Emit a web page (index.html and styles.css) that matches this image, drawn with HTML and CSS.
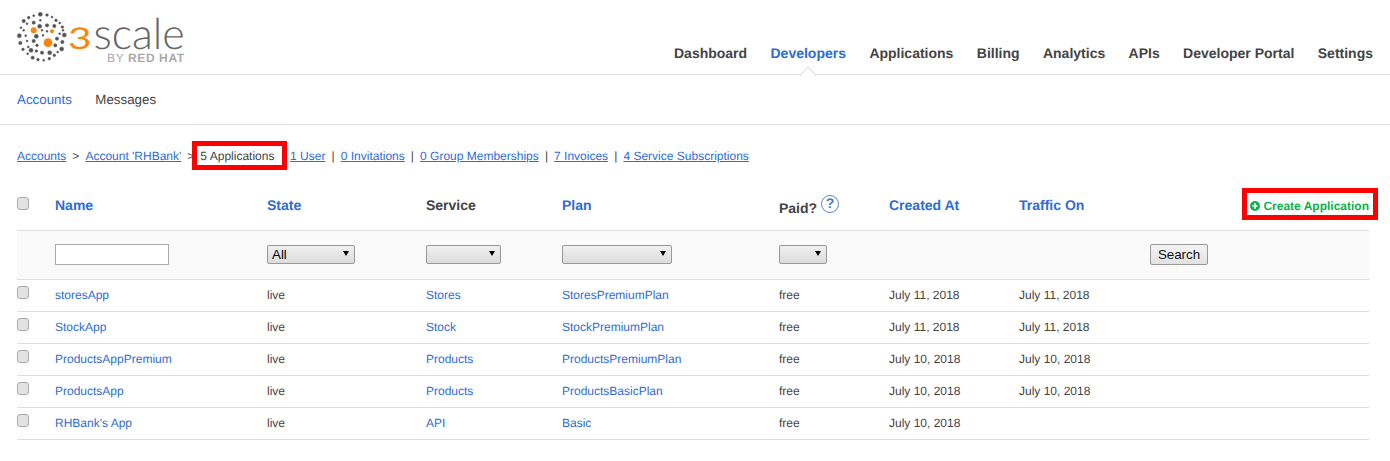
FILE: index.html
```html
<!DOCTYPE html>
<html lang="en">
<head>
    <meta charset="UTF-8">
    <title>Applications</title>
    <link rel="stylesheet" href="styles.css">
</head>
<body>
    <header class="top">
        <div class="logo">
            <svg class="logo-dots" viewBox="50 35 150 150" width="50" height="50">
                <g fill="#555" stroke="#555" stroke-width="1.5">
                    <circle cx="120" cy="42" r="6"/><circle cx="100" cy="46" r="3"/><circle cx="85" cy="52" r="4"/>
                    <circle cx="140" cy="44" r="4"/><circle cx="155" cy="50" r="3"/><circle cx="167" cy="60" r="4"/>
                    <circle cx="178" cy="68" r="3"/><circle cx="186" cy="80" r="4"/><circle cx="70" cy="62" r="5"/>
                    <circle cx="80" cy="70" r="3"/><circle cx="62" cy="82" r="3"/><circle cx="70" cy="90" r="3"/>
                    <circle cx="57" cy="106" r="6"/><circle cx="76" cy="106" r="3"/><circle cx="60" cy="128" r="5"/>
                    <circle cx="80" cy="122" r="3"/><circle cx="68" cy="147" r="4"/><circle cx="84" cy="140" r="3"/>
                    <circle cx="82" cy="160" r="3"/><circle cx="97" cy="172" r="5"/><circle cx="113" cy="178" r="4"/>
                    <circle cx="130" cy="180" r="3"/><circle cx="147" cy="175" r="4"/><circle cx="162" cy="165" r="4"/>
                    <circle cx="172" cy="155" r="3"/><circle cx="184" cy="146" r="6"/><circle cx="186" cy="125" r="5"/>
                    <circle cx="192" cy="104" r="6"/><circle cx="188" cy="90" r="3"/><circle cx="120" cy="60" r="3"/>
                    <circle cx="140" cy="75" r="5"/><circle cx="118" cy="78" r="6"/><circle cx="100" cy="67" r="5"/>
                    <circle cx="162" cy="77" r="5"/><circle cx="178" cy="100" r="3"/><circle cx="170" cy="115" r="5"/>
                    <circle cx="165" cy="135" r="5"/><circle cx="148" cy="157" r="6"/><circle cx="125" cy="157" r="5"/>
                    <circle cx="108" cy="152" r="4"/><circle cx="92" cy="150" r="6"/><circle cx="110" cy="135" r="4"/>
                    <circle cx="100" cy="122" r="5"/><circle cx="108" cy="108" r="6"/><circle cx="128" cy="105" r="3"/>
                    <circle cx="125" cy="90" r="3"/><circle cx="140" cy="93" r="3"/>
                </g>
                <g fill="#f7860f">
                    <circle cx="100" cy="90" r="9"/><circle cx="155" cy="93" r="6"/><circle cx="143" cy="127" r="13"/>
                </g>
            </svg>
            <div class="logo-type">
                <div class="logo-name"><span class="logo-three">3</span>scale</div>
                <div class="logo-by">BY <b>RED HAT</b></div>
            </div>
        </div>
        <nav class="main-nav">
            <a href="#">Dashboard</a>
            <a href="#" class="current">Developers</a>
            <a href="#">Applications</a>
            <a href="#">Billing</a>
            <a href="#">Analytics</a>
            <a href="#">APIs</a>
            <a href="#">Developer Portal</a>
            <a href="#">Settings</a>
        </nav>
    </header>

    <nav class="sub-nav">
        <a href="#" class="link">Accounts</a>
        <a href="#">Messages</a>
    </nav>

    <div class="crumbs">
        <a href="#">Accounts</a><span class="sep">&gt;</span><a href="#">Account 'RHBank'</a><span class="sep">&gt;</span><span class="marked">5 Applications</span><span class="sep bar">|</span><a href="#">1 User</a><span class="sep pipe">|</span><a href="#">0 Invitations</a><span class="sep pipe">|</span><a href="#">0 Group Memberships</a><span class="sep pipe">|</span><a href="#">7 Invoices</a><span class="sep pipe">|</span><a href="#">4 Service Subscriptions</a>
    </div>

    <table class="apps">
        <colgroup>
            <col class="c-check"><col class="c-name"><col class="c-state"><col class="c-service"><col class="c-plan"><col class="c-paid"><col class="c-created"><col class="c-traffic"><col class="c-action">
        </colgroup>
        <thead>
            <tr class="heads">
                <th><input type="checkbox" class="check"></th>
                <th><a href="#">Name</a></th>
                <th><a href="#">State</a></th>
                <th>Service</th>
                <th><a href="#">Plan</a></th>
                <th>Paid? <span class="help">?</span></th>
                <th><a href="#">Created At</a></th>
                <th><a href="#">Traffic On</a></th>
                <th class="action">
                    <a href="#" class="create">
                        <svg viewBox="0 0 12 12" width="10" height="10"><circle cx="6" cy="6" r="6" fill="#0db14b"/><path d="M6 2.8v6.4M2.8 6h6.4" stroke="#fff" stroke-width="2"/></svg>
                        Create Application
                    </a>
                </th>
            </tr>
            <tr class="filters">
                <td></td>
                <td><input type="text" class="name-filter"></td>
                <td><span class="pick w-state"><select><option>All</option></select></span></td>
                <td><span class="pick w-service"><select><option></option></select></span></td>
                <td><span class="pick w-plan"><select><option></option></select></span></td>
                <td><span class="pick w-paid"><select><option></option></select></span></td>
                <td></td>
                <td></td>
                <td><button class="search">Search</button></td>
            </tr>
        </thead>
        <tbody>
            <tr>
                <td><input type="checkbox" class="check"></td>
                <td><a href="#">storesApp</a></td>
                <td>live</td>
                <td><a href="#">Stores</a></td>
                <td><a href="#">StoresPremiumPlan</a></td>
                <td>free</td>
                <td>July 11, 2018</td>
                <td>July 11, 2018</td>
                <td></td>
            </tr>
            <tr>
                <td><input type="checkbox" class="check"></td>
                <td><a href="#">StockApp</a></td>
                <td>live</td>
                <td><a href="#">Stock</a></td>
                <td><a href="#">StockPremiumPlan</a></td>
                <td>free</td>
                <td>July 11, 2018</td>
                <td>July 11, 2018</td>
                <td></td>
            </tr>
            <tr>
                <td><input type="checkbox" class="check"></td>
                <td><a href="#">ProductsAppPremium</a></td>
                <td>live</td>
                <td><a href="#">Products</a></td>
                <td><a href="#">ProductsPremiumPlan</a></td>
                <td>free</td>
                <td>July 10, 2018</td>
                <td>July 10, 2018</td>
                <td></td>
            </tr>
            <tr>
                <td><input type="checkbox" class="check"></td>
                <td><a href="#">ProductsApp</a></td>
                <td>live</td>
                <td><a href="#">Products</a></td>
                <td><a href="#">ProductsBasicPlan</a></td>
                <td>free</td>
                <td>July 10, 2018</td>
                <td>July 10, 2018</td>
                <td></td>
            </tr>
            <tr>
                <td><input type="checkbox" class="check"></td>
                <td><a href="#">RHBank's App</a></td>
                <td>live</td>
                <td><a href="#">API</a></td>
                <td><a href="#">Basic</a></td>
                <td>free</td>
                <td>July 10, 2018</td>
                <td></td>
                <td></td>
            </tr>
        </tbody>
    </table>
</body>
</html>
```

FILE: styles.css
```css
html, body {
    margin: 0;
    padding: 0;
    overflow: hidden;
}
body {
    font-family: "Liberation Sans", Arial, sans-serif;
    font-size: 12px;
    color: #444;
    background: #fff;
    text-rendering: geometricPrecision;
}
a {
    color: #2f6dd0;
    text-decoration: none;
}

/* top bar */
.top {
    display: flex;
    justify-content: space-between;
    align-items: flex-start;
    height: 74px;
    padding: 0 17px;
    border-bottom: 1px solid #ddd;
}
.logo {
    display: flex;
    align-items: flex-start;
    padding-top: 12px;
}
.logo-dots {
    display: block;
}
.logo-type {
    margin-left: 4px;
}
.logo-name {
    font-family: Lato, sans-serif;
    font-weight: 300;
    font-size: 43px;
    line-height: 40px;
    height: 40px;
    margin-top: 2px;
    color: #666;
}
.logo-three {
    display: inline-block;
    font-weight: 400;
    font-size: 30px;
    color: #f7860f;
    margin-right: 5px;
    transform: scaleX(1.35);
}
.logo-by {
    text-align: right;
    margin-top: -2px;
    font-size: 12px;
    line-height: 12px;
    letter-spacing: 0.6px;
    color: #aaa;
}
.main-nav {
    display: flex;
    gap: 23.4px;
    padding-top: 45px;
}
.main-nav a {
    position: relative;
    font-size: 14px;
    font-weight: bold;
    line-height: 16px;
    color: #444;
}
.main-nav a.current {
    color: #2f6dd0;
}
.main-nav a.current::after {
    content: "";
    position: absolute;
    left: 50%;
    top: 24px;
    width: 11px;
    height: 11px;
    margin-left: -6px;
    background: #fff;
    border-left: 1px solid #ddd;
    border-top: 1px solid #ddd;
    transform: rotate(45deg);
}

/* second bar */
.sub-nav {
    display: flex;
    gap: 23.5px;
    height: 49px;
    padding: 0 17px;
    align-items: center;
    border-bottom: 1px solid #ddd;
    font-size: 13.33px;
}
.sub-nav a {
    color: #444;
}
.sub-nav a.link {
    color: #2f6dd0;
}

/* breadcrumbs */
.crumbs {
    padding: 24px 17px 0;
    line-height: 14px;
    height: 32px;
}
.crumbs a {
    text-decoration: underline;
}
.sep {
    margin: 0 6px;
}
.sep.pipe {
    margin: 0 6.1px;
}
.sep.bar {
    margin: 0 5px 0 7.5px;
}
.marked {
    position: relative;
}
.marked::after {
    content: "";
    position: absolute;
    left: -8px;
    right: -13px;
    top: -8px;
    height: 19px;
    border: 5px solid #f00;
}

/* table */
.apps {
    table-layout: fixed;
    border-collapse: collapse;
    width: 1352px;
    margin-left: 17px;
}
.c-check { width: 38px; }
.c-name { width: 212px; }
.c-state { width: 159px; }
.c-service { width: 136px; }
.c-plan { width: 217px; }
.c-paid { width: 110px; }
.c-created { width: 130px; }
.c-traffic { width: 131px; }
.c-action { width: 219px; }

.apps th, .apps td {
    padding: 0;
    text-align: left;
    border-bottom: 1px solid #ddd;
}
.heads {
    height: 49px;
}
.heads th {
    font-size: 14px;
    line-height: 16px;
    vertical-align: middle;
}
.heads th a {
    font-weight: bold;
}
.heads .action {
    text-align: right;
}
.help {
    display: inline-block;
    box-sizing: border-box;
    width: 18px;
    height: 18px;
    vertical-align: 5px;
    border: 1px solid #5c88c9;
    border-radius: 50%;
    line-height: 15px;
    text-align: center;
    color: #4a7cc9;
}
.create {
    position: relative;
    font-size: 12px;
    color: #0db14b !important;
}
.create svg {
    vertical-align: -1px;
}
.create::after {
    content: "";
    position: absolute;
    left: -8px;
    right: -9px;
    top: -11px;
    height: 22px;
    border: 5px solid #f00;
}
.filters {
    height: 49px;
    background: #fafafa;
}
.apps tbody tr {
    height: 32px;
}
.apps tbody td {
    vertical-align: middle;
}
.check {
    appearance: none;
    display: block;
    box-sizing: border-box;
    width: 12px;
    height: 13px;
    margin: 0;
    background: #e2e2e2;
    border: 1px solid #aaa;
    border-radius: 3px;
}
.heads .check {
    margin-bottom: 3px;
}
.apps tbody .check {
    margin-bottom: 6px;
}
.name-filter {
    display: block;
    box-sizing: border-box;
    width: 114px;
    height: 21px;
    margin: 0;
    padding: 0 4px;
    background: #fff;
    border: 1px solid #aaa;
}
.pick {
    position: relative;
    display: block;
    height: 19px;
}
.pick select {
    appearance: none;
    display: block;
    box-sizing: border-box;
    width: 100%;
    height: 19px;
    margin: 0;
    padding: 0 4px;
    font-family: "Liberation Sans", Arial, sans-serif;
    font-size: 13.33px;
    color: #000;
    background: linear-gradient(#f0f0f0, #dcdcdc);
    border: 1px solid #999;
    border-radius: 2px;
}
.pick::after {
    content: "";
    position: absolute;
    right: 6px;
    top: 6px;
    border-left: 3px solid transparent;
    border-right: 3px solid transparent;
    border-top: 5px solid #000;
}
.w-state { width: 88px; }
.w-service { width: 75px; }
.w-plan { width: 110px; }
.w-paid { width: 48px; }
.search {
    display: block;
    box-sizing: border-box;
    width: 58px;
    height: 21px;
    margin: 0;
    padding: 0;
    font-family: "Liberation Sans", Arial, sans-serif;
    font-size: 13.33px;
    color: #111;
    background: linear-gradient(#f4f4f4, #e2e2e2);
    border: 1px solid #999;
    border-radius: 2px;
}
```
